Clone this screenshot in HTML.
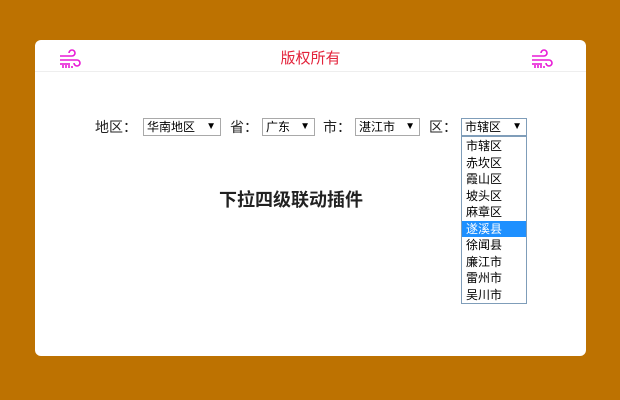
<!DOCTYPE html>
<html><head><meta charset="utf-8"><style>
*{margin:0;padding:0;box-sizing:border-box}
body{width:620px;height:400px;background:#bd7201;position:relative;font-family:"Liberation Sans","Noto Sans CJK SC",sans-serif;overflow:hidden}
.card{position:absolute;left:35px;top:40px;width:551px;height:316px;background:#fff;border-radius:6px}
.hdr{position:absolute;left:0;top:0;width:100%;height:32px;border-bottom:1px solid #eee}
.title{position:absolute;left:0;width:100%;top:7px;text-align:center;color:#e3233b;font-size:15px}
.ic{position:absolute;top:9px}
.t{position:absolute;top:117px;font-size:14px;color:#222;line-height:20px}
.sel{position:absolute;top:118px;height:18px;border:1px solid #a9a9a9;background:#fff;font-size:12px;line-height:16px;padding-left:3px;color:#000}
.sel span{position:absolute;right:4px;top:0;font-size:10px}
.list{position:absolute;left:461px;top:136px;width:66px;height:168px;border:1px solid #7f9db9;background:#fff;font-size:12px;padding-top:1px}
.list div{height:16.5px;line-height:16px;padding-left:4px;color:#000}
.list .hl{background:#1e90ff;color:#fff}
h1{position:absolute;left:0;width:582px;text-align:center;top:186px;font-size:18px;font-weight:bold;color:#222}
</style></head><body>
<div class="card"><div class="hdr">
<svg class="ic" style="left:23px" width="24" height="20" viewBox="0 0 24 20" fill="none" stroke="#e81cd6" stroke-width="1.6"><path d="M2 7h12a3 3 0 1 0-3-3"/><path d="M2 11h17a3 3 0 1 1-3 3"/><path d="M2 15h10"/><path d="M5 16v3M8 16v3M11 16v3M14 17v2"/></svg>
<div class="title">版权所有</div>
<svg class="ic" style="left:495px" width="24" height="20" viewBox="0 0 24 20" fill="none" stroke="#e81cd6" stroke-width="1.6"><path d="M2 7h12a3 3 0 1 0-3-3"/><path d="M2 11h17a3 3 0 1 1-3 3"/><path d="M2 15h10"/><path d="M5 16v3M8 16v3M11 16v3M14 17v2"/></svg>
</div></div>
<div class="t" style="left:95px">地区：</div>
<div class="sel" style="left:143px;width:78px">华南地区<span>▼</span></div>
<div class="t" style="left:230px">省：</div>
<div class="sel" style="left:262px;width:53px">广东<span>▼</span></div>
<div class="t" style="left:323px">市：</div>
<div class="sel" style="left:355px;width:65px">湛江市<span>▼</span></div>
<div class="t" style="left:429px">区：</div>
<div class="sel" style="left:461px;width:66px;border-color:#7f9db9">市辖区<span>▼</span></div>
<div class="list"><div>市辖区</div><div>赤坎区</div><div>霞山区</div><div>坡头区</div><div>麻章区</div><div class="hl">遂溪县</div><div>徐闻县</div><div>廉江市</div><div>雷州市</div><div>吴川市</div></div>
<h1>下拉四级联动插件</h1>
</body></html>
